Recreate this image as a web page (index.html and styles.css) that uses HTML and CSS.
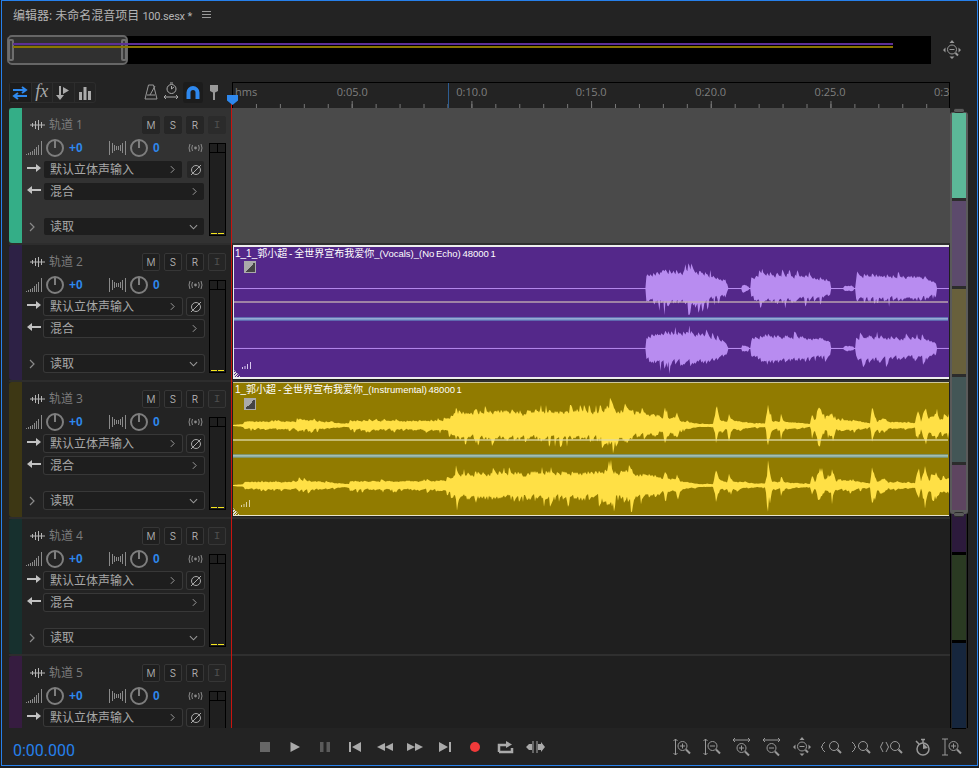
FILE: index.html
```html
<!DOCTYPE html>
<html lang="zh-CN">
<head>
    <meta charset="UTF-8">
    <title>编辑器</title>
    <link rel="stylesheet" href="styles.css">
</head>
<body>
    <!-- shared icons -->
    <svg class="defs" width="0" height="0">
        <symbol id="i-wave" viewBox="0 0 15 12"><path d="M0 6H15M2.500 4v4M5.500 2v8M8.500 1v10M11.500 3v6" stroke="currentColor" fill="none"/></symbol>
        <symbol id="i-vol" viewBox="0 0 16 16"><path d="M.5 14v1M2.500 13v2M4.500 12v3M6.500 11v4M8.500 9v6M10.500 7v8M12.500 5v10M15.500 1v14" stroke="currentColor" fill="none"/></symbol>
        <symbol id="i-pan" viewBox="0 0 17 16"><path d="M.5 1v14M3.500 3v10M5.500 5v6M7.500 6v4M9.500 6v4M11.500 5v6M13.500 3v10M16.500 1v14" stroke="currentColor" fill="none"/></symbol>
        <symbol id="i-knob" viewBox="0 0 18 18"><circle cx="9" cy="9" r="8" stroke="currentColor" stroke-width="2" fill="none"/><path d="M9 1V9" stroke="currentColor" stroke-width="2"/></symbol>
        <symbol id="i-radio" viewBox="0 0 17 10"><circle cx="8.500" cy="5" r="1.400" fill="currentColor"/><path d="M5.500 2Q4 5 5.500 8M3 1Q1 5 3 9M11.500 2Q13 5 11.500 8M14 1Q16 5 14 9" stroke="currentColor" fill="none"/></symbol>
        <symbol id="i-right" viewBox="0 0 14 10"><path d="M0 5H11" stroke="currentColor" stroke-width="2"/><path d="M9 1L14 5L9 9Z" fill="currentColor"/></symbol>
        <symbol id="i-left" viewBox="0 0 14 10"><path d="M3 5H14" stroke="currentColor" stroke-width="2"/><path d="M5 1L0 5L5 9Z" fill="currentColor"/></symbol>
        <symbol id="i-chev" viewBox="0 0 6 10"><path d="M1 1L5 5L1 9" stroke="currentColor" stroke-width="1.200" fill="none"/></symbol>
        <symbol id="i-down" viewBox="0 0 10 6"><path d="M1 1L5 5L9 1" stroke="currentColor" stroke-width="1.200" fill="none"/></symbol>
        <symbol id="i-phase" viewBox="0 0 12 12"><circle cx="6" cy="6" r="4.500" stroke="currentColor" fill="none"/><path d="M1 11L11 1" stroke="currentColor"/></symbol>

        <symbol id="z-vin" viewBox="0 0 24 24"><path d="M5.500 4V20M3.500 6L5.500 4L7.500 6M3.500 18L5.500 20L7.500 18" stroke="currentColor" fill="none"/><circle cx="12.500" cy="11" r="4.500" stroke="currentColor" fill="none"/><path d="M16 14.500L20 18.500" stroke="currentColor" stroke-width="2"/><path d="M10 11H15M12.500 8.500V13.500" stroke="currentColor"/></symbol>
        <symbol id="z-vout" viewBox="0 0 24 24"><path d="M5.500 4V20M3.500 6L5.500 4L7.500 6M3.500 18L5.500 20L7.500 18" stroke="currentColor" fill="none"/><circle cx="12.500" cy="11" r="4.500" stroke="currentColor" fill="none"/><path d="M16 14.500L20 18.500" stroke="currentColor" stroke-width="2"/><path d="M10 11H15" stroke="currentColor"/></symbol>
        <symbol id="z-hin" viewBox="0 0 24 24"><path d="M3 5H20M5 3L3 5L5 7M18 3L20 5L18 7" stroke="currentColor" fill="none"/><circle cx="11.500" cy="13" r="4.500" stroke="currentColor" fill="none"/><path d="M15 16.500L19 20.500" stroke="currentColor" stroke-width="2"/><path d="M9 13H14M11.500 10.500V15.500" stroke="currentColor"/></symbol>
        <symbol id="z-hout" viewBox="0 0 24 24"><path d="M3 5H20M5 3L3 5L5 7M18 3L20 5L18 7" stroke="currentColor" fill="none"/><circle cx="11.500" cy="13" r="4.500" stroke="currentColor" fill="none"/><path d="M15 16.500L19 20.500" stroke="currentColor" stroke-width="2"/><path d="M9 13H14" stroke="currentColor"/></symbol>
        <symbol id="z-full" viewBox="0 0 24 24"><circle cx="12" cy="11.500" r="4.500" stroke="currentColor" fill="none"/><path d="M15.500 15L18 17.500" stroke="currentColor" stroke-width="2"/><path d="M9.500 11.500H14.500" stroke="currentColor"/><path d="M12 2L14.500 5H9.500ZM12 21L14.500 18.500H9.500ZM3 12L5.500 9.500V14.500ZM21 12L18.500 9.500V14.500Z" fill="currentColor"/></symbol>
        <symbol id="z-lmark" viewBox="0 0 24 24"><path d="M5 7L2.500 9.500V11L1 12L2.500 13V14.500L5 17" stroke="currentColor" fill="none"/><circle cx="14" cy="11" r="4.500" stroke="currentColor" fill="none"/><path d="M17.500 14.500L21 18" stroke="currentColor" stroke-width="2"/></symbol>
        <symbol id="z-rmark" viewBox="0 0 24 24"><path d="M2 7L4.500 9.500V11L6 12L4.500 13V14.500L2 17" stroke="currentColor" fill="none"/><circle cx="13" cy="11" r="4.500" stroke="currentColor" fill="none"/><path d="M16.500 14.500L20 18" stroke="currentColor" stroke-width="2"/></symbol>
        <symbol id="z-both" viewBox="0 0 24 24"><path d="M3 7L.5 12L3 17M6 7L8.500 12L6 17" stroke="currentColor" fill="none"/><circle cx="15" cy="11" r="4.500" stroke="currentColor" fill="none"/><path d="M18.500 14.500L22 18" stroke="currentColor" stroke-width="2"/></symbol>
        <symbol id="z-time" viewBox="0 0 24 24"><circle cx="13" cy="14" r="6" stroke="currentColor" stroke-width="1.500" fill="none"/><path d="M13 14L13 8L18 13Z" fill="currentColor"/><path d="M11 4.500H15M13 4.500V8M6 6L9 9" stroke="currentColor" stroke-width="1.500"/></symbol>
        <symbol id="z-beam" viewBox="0 0 24 24"><path d="M5 4V20M2 4H8M2 20H8" stroke="currentColor" fill="none"/><circle cx="13.500" cy="11" r="4.500" stroke="currentColor" fill="none"/><path d="M17 14.500L21 18.500" stroke="currentColor" stroke-width="2"/><path d="M11 11H16M13.500 8.500V13.500" stroke="currentColor"/></symbol>
    </svg>

    <div class="app">
        <div class="titlebar">
            <span class="title">编辑器: 未命名混音项目 <span class="title-file">100.sesx *</span></span>
            <svg class="menu-icon" width="9" height="8" viewBox="0 0 9 8"><path d="M0 .5H9M0 3.500H9M0 6.500H9" stroke="currentColor"/></svg>
        </div>

        <div class="overview">
            <div class="overview-track">
                <div class="overview-handle"><span class="grip"></span><span class="grip"></span></div>
                <div class="overview-line purple"></div>
                <div class="overview-line olive"></div>
            </div>
            <svg class="overview-zoom"><use href="#z-full"/></svg>
        </div>

        <div class="workspace">
            <div class="toolbar">
                <div class="tool-group">
                    <span class="tool active">
                        <svg width="16" height="14" viewBox="0 0 16 14"><path d="M1 4H13M10 1L14 4L10 7M15 10H3M6 7L2 10L6 13" stroke="#2e88ee" stroke-width="2" fill="none"/></svg>
                    </span>
                    <span class="tool fx">fx</span>
                    <span class="tool">
                        <svg width="16" height="16" viewBox="0 0 16 16"><path d="M5 1V11" stroke="#aaa" stroke-width="2"/><path d="M1 10H9L5 15ZM8 2V9L14 5.500Z" fill="#aaa"/></svg>
                    </span>
                    <span class="tool">
                        <svg width="14" height="14" viewBox="0 0 14 14"><path d="M1 6H4V14H1ZM5.500 1H8.500V14H5.500ZM10 5H13V14H10Z" fill="#aaa"/></svg>
                    </span>
                </div>
                <svg class="tool-icon first" viewBox="0 0 20 20"><path d="M7.500 3H12.500L16 17H4ZM6 13H14M9 13L14 4" stroke="#999" fill="none"/></svg>
                <svg class="tool-icon" viewBox="0 0 20 20"><circle cx="10.500" cy="7" r="4.500" stroke="#aaa" fill="none"/><path d="M9 1H12M10.500 4V7L13 5M3 15H17M5 13L3 15L5 17M15 13L17 15L15 17" stroke="#aaa" fill="none"/></svg>
                <span class="tool magnet">
                    <svg width="14" height="13" viewBox="0 0 14 13"><path d="M2.500 13V6.500A4.500 4.500 0 0 1 11.500 6.500V13" stroke="#2e88ee" stroke-width="4" fill="none"/></svg>
                </span>
                <svg class="tool-icon" viewBox="0 0 20 20"><path d="M6 3H14V9L11 10.500V18H9V10.500L6 9Z" fill="#999"/></svg>
            </div>

            <div class="ruler">
                <span class="ruler-unit">hms</span>
                <span class="ruler-label">0:05.0</span>
                <span class="ruler-label">0:10.0</span>
                <span class="ruler-label">0:15.0</span>
                <span class="ruler-label">0:20.0</span>
                <span class="ruler-label">0:25.0</span>
                <span class="ruler-label cut">0:3</span>
                <span class="ruler-mark"></span>
            </div>
            <div class="ruler-end"></div>

            <div class="headers">
                <div class="track selected">
                    <div class="strip c1"></div>
                    <div class="track-body">
                        <div class="track-top">
                            <svg class="ic-wave"><use href="#i-wave"/></svg>
                            <span class="track-name">轨道 1</span>
                            <span class="msri">M</span><span class="msri">S</span><span class="msri">R</span><span class="msri off">I</span>
                        </div>
                        <div class="track-main">
                            <div class="controls">
                                <div class="knobs">
                                    <svg class="ic-vol"><use href="#i-vol"/></svg><svg class="knob"><use href="#i-knob"/></svg><span class="val vol">+0</span>
                                    <svg class="ic-pan"><use href="#i-pan"/></svg><svg class="knob"><use href="#i-knob"/></svg><span class="val pan">0</span>
                                    <svg class="ic-radio"><use href="#i-radio"/></svg>
                                </div>
                                <div class="io"><svg class="ic-arrow"><use href="#i-right"/></svg><div class="select short">默认立体声输入<svg class="ic-chev"><use href="#i-chev"/></svg></div><span class="phase"><svg><use href="#i-phase"/></svg></span></div>
                                <div class="io"><svg class="ic-arrow"><use href="#i-left"/></svg><div class="select">混合<svg class="ic-chev"><use href="#i-chev"/></svg></div></div>
                                <div class="io auto"><svg class="ic-expand"><use href="#i-chev"/></svg><div class="select">读取<svg class="ic-downv"><use href="#i-down"/></svg></div></div>
                            </div>
                            <div class="meter"><div class="meter-head"><span></span><span></span></div><div class="meter-foot"><span></span><span></span></div></div>
                        </div>
                    </div>
                </div>
                <div class="track">
                    <div class="strip c2"></div>
                    <div class="track-body">
                        <div class="track-top">
                            <svg class="ic-wave"><use href="#i-wave"/></svg>
                            <span class="track-name">轨道 2</span>
                            <span class="msri">M</span><span class="msri">S</span><span class="msri">R</span><span class="msri off">I</span>
                        </div>
                        <div class="track-main">
                            <div class="controls">
                                <div class="knobs">
                                    <svg class="ic-vol"><use href="#i-vol"/></svg><svg class="knob"><use href="#i-knob"/></svg><span class="val vol">+0</span>
                                    <svg class="ic-pan"><use href="#i-pan"/></svg><svg class="knob"><use href="#i-knob"/></svg><span class="val pan">0</span>
                                    <svg class="ic-radio"><use href="#i-radio"/></svg>
                                </div>
                                <div class="io"><svg class="ic-arrow"><use href="#i-right"/></svg><div class="select short">默认立体声输入<svg class="ic-chev"><use href="#i-chev"/></svg></div><span class="phase"><svg><use href="#i-phase"/></svg></span></div>
                                <div class="io"><svg class="ic-arrow"><use href="#i-left"/></svg><div class="select">混合<svg class="ic-chev"><use href="#i-chev"/></svg></div></div>
                                <div class="io auto"><svg class="ic-expand"><use href="#i-chev"/></svg><div class="select">读取<svg class="ic-downv"><use href="#i-down"/></svg></div></div>
                            </div>
                            <div class="meter"><div class="meter-head"><span></span><span></span></div><div class="meter-foot"><span></span><span></span></div></div>
                        </div>
                    </div>
                </div>
                <div class="track">
                    <div class="strip c3"></div>
                    <div class="track-body">
                        <div class="track-top">
                            <svg class="ic-wave"><use href="#i-wave"/></svg>
                            <span class="track-name">轨道 3</span>
                            <span class="msri">M</span><span class="msri">S</span><span class="msri">R</span><span class="msri off">I</span>
                        </div>
                        <div class="track-main">
                            <div class="controls">
                                <div class="knobs">
                                    <svg class="ic-vol"><use href="#i-vol"/></svg><svg class="knob"><use href="#i-knob"/></svg><span class="val vol">+0</span>
                                    <svg class="ic-pan"><use href="#i-pan"/></svg><svg class="knob"><use href="#i-knob"/></svg><span class="val pan">0</span>
                                    <svg class="ic-radio"><use href="#i-radio"/></svg>
                                </div>
                                <div class="io"><svg class="ic-arrow"><use href="#i-right"/></svg><div class="select short">默认立体声输入<svg class="ic-chev"><use href="#i-chev"/></svg></div><span class="phase"><svg><use href="#i-phase"/></svg></span></div>
                                <div class="io"><svg class="ic-arrow"><use href="#i-left"/></svg><div class="select">混合<svg class="ic-chev"><use href="#i-chev"/></svg></div></div>
                                <div class="io auto"><svg class="ic-expand"><use href="#i-chev"/></svg><div class="select">读取<svg class="ic-downv"><use href="#i-down"/></svg></div></div>
                            </div>
                            <div class="meter"><div class="meter-head"><span></span><span></span></div><div class="meter-foot"><span></span><span></span></div></div>
                        </div>
                    </div>
                </div>
                <div class="track">
                    <div class="strip c4"></div>
                    <div class="track-body">
                        <div class="track-top">
                            <svg class="ic-wave"><use href="#i-wave"/></svg>
                            <span class="track-name">轨道 4</span>
                            <span class="msri">M</span><span class="msri">S</span><span class="msri">R</span><span class="msri off">I</span>
                        </div>
                        <div class="track-main">
                            <div class="controls">
                                <div class="knobs">
                                    <svg class="ic-vol"><use href="#i-vol"/></svg><svg class="knob"><use href="#i-knob"/></svg><span class="val vol">+0</span>
                                    <svg class="ic-pan"><use href="#i-pan"/></svg><svg class="knob"><use href="#i-knob"/></svg><span class="val pan">0</span>
                                    <svg class="ic-radio"><use href="#i-radio"/></svg>
                                </div>
                                <div class="io"><svg class="ic-arrow"><use href="#i-right"/></svg><div class="select short">默认立体声输入<svg class="ic-chev"><use href="#i-chev"/></svg></div><span class="phase"><svg><use href="#i-phase"/></svg></span></div>
                                <div class="io"><svg class="ic-arrow"><use href="#i-left"/></svg><div class="select">混合<svg class="ic-chev"><use href="#i-chev"/></svg></div></div>
                                <div class="io auto"><svg class="ic-expand"><use href="#i-chev"/></svg><div class="select">读取<svg class="ic-downv"><use href="#i-down"/></svg></div></div>
                            </div>
                            <div class="meter"><div class="meter-head"><span></span><span></span></div><div class="meter-foot"><span></span><span></span></div></div>
                        </div>
                    </div>
                </div>
                <div class="track">
                    <div class="strip c5"></div>
                    <div class="track-body">
                        <div class="track-top">
                            <svg class="ic-wave"><use href="#i-wave"/></svg>
                            <span class="track-name">轨道 5</span>
                            <span class="msri">M</span><span class="msri">S</span><span class="msri">R</span><span class="msri off">I</span>
                        </div>
                        <div class="track-main">
                            <div class="controls">
                                <div class="knobs">
                                    <svg class="ic-vol"><use href="#i-vol"/></svg><svg class="knob"><use href="#i-knob"/></svg><span class="val vol">+0</span>
                                    <svg class="ic-pan"><use href="#i-pan"/></svg><svg class="knob"><use href="#i-knob"/></svg><span class="val pan">0</span>
                                    <svg class="ic-radio"><use href="#i-radio"/></svg>
                                </div>
                                <div class="io"><svg class="ic-arrow"><use href="#i-right"/></svg><div class="select short">默认立体声输入<svg class="ic-chev"><use href="#i-chev"/></svg></div><span class="phase"><svg><use href="#i-phase"/></svg></span></div>
                            </div>
                            <div class="meter"><div class="meter-head"><span></span><span></span></div></div>
                        </div>
                    </div>
                </div>
            </div>

            <div class="lanes">
                <div class="lane filled"></div>
                <div class="lane">
                    <div class="clip vocals">
                        <svg class="waves" id="wave-vocals" viewBox="233 247 716 130"></svg>
                        <div class="clip-title">1_1_郭小超 - 全世界宣布我爱你<span class="ascii">_(Vocals)_(No Echo) 48000 1</span></div>
                        <div class="fade"></div>
                        <svg class="clip-bars" viewBox="0 0 10 7"><path d="M.5 7V5M3 7V4M5.500 7V2M8.500 7V0" stroke="#d8c8ee" fill="none"/></svg>
                        <div class="corner"></div>
                    </div>
                </div>
                <div class="lane">
                    <div class="clip instrumental">
                        <svg class="waves" id="wave-inst" viewBox="233 383 716 132"></svg>
                        <div class="clip-title">1_郭小超 - 全世界宣布我爱你<span class="ascii">_(Instrumental) 48000 1</span></div>
                        <div class="fade"></div>
                        <svg class="clip-bars" viewBox="0 0 10 7"><path d="M.5 7V5M3 7V4M5.500 7V2M8.500 7V0" stroke="#ddd3a0" fill="none"/></svg>
                        <div class="corner"></div>
                    </div>
                </div>
                <div class="lane"></div>
                <div class="lane"></div>
            </div>

            <div class="scroll">
                <div class="scroll-thumb">
                    <span class="scroll-grip top"></span>
                    <div class="seg s1"></div>
                    <div class="seg s2"></div>
                    <div class="seg s3"></div>
                    <div class="seg s4"></div>
                    <div class="seg s5"></div>
                    <span class="scroll-grip bottom"></span>
                </div>
                <div class="scroll-rest">
                    <div class="seg s6"></div>
                    <div class="seg s7"></div>
                    <div class="seg s8"></div>
                </div>
            </div>

            <div class="playhead"><span class="playhead-cap"></span></div>
        </div>

        <div class="transport">
            <span class="time">0:00.000</span>
            <div class="controls-center">
                <svg class="btn" viewBox="0 0 24 24"><path d="M7 7H17V17H7Z" fill="#666"/></svg>
                <svg class="btn" viewBox="0 0 24 24"><path d="M7.500 7L17 12L7.500 17Z" fill="#aaa"/></svg>
                <svg class="btn" viewBox="0 0 24 24"><path d="M7 7H10.500V17H7ZM13.500 7H17V17H13.500Z" fill="#5a5a5a"/></svg>
                <svg class="btn" viewBox="0 0 24 24"><path d="M6 7H8V17H6ZM18 7V17L9 12Z" fill="#aaa"/></svg>
                <svg class="btn" viewBox="0 0 24 24"><path d="M12 8V16L4 12ZM20 8V16L12 12Z" fill="#aaa"/></svg>
                <svg class="btn" viewBox="0 0 24 24"><path d="M4 8V16L12 12ZM12 8V16L20 12Z" fill="#aaa"/></svg>
                <svg class="btn" viewBox="0 0 24 24"><path d="M16 7H18V17H16ZM6 7V17L15 12Z" fill="#aaa"/></svg>
                <svg class="btn" viewBox="0 0 24 24"><circle cx="12" cy="12" r="5" fill="#f03a3a"/></svg>
                <svg class="btn" viewBox="0 0 24 24"><path d="M6 17V10H13M19 13V17H6" stroke="#aaa" stroke-width="2.500" fill="none"/><path d="M13 6L19 9.500L13 13Z" fill="#aaa"/></svg>
                <svg class="btn" viewBox="0 0 24 24"><path d="M10 6V18M14 6V18" stroke="#aaa"/><path d="M3 12L6 9H9V15H6ZM15 9H18V7L22 12L18 17V15H15Z" fill="#aaa"/></svg>
            </div>
            <div class="controls-right">
                <svg class="btn"><use href="#z-vin"/></svg>
                <svg class="btn"><use href="#z-vout"/></svg>
                <svg class="btn"><use href="#z-hin"/></svg>
                <svg class="btn"><use href="#z-hout"/></svg>
                <svg class="btn"><use href="#z-full"/></svg>
                <svg class="btn"><use href="#z-lmark"/></svg>
                <svg class="btn"><use href="#z-rmark"/></svg>
                <svg class="btn"><use href="#z-both"/></svg>
                <svg class="btn"><use href="#z-time"/></svg>
                <svg class="btn"><use href="#z-beam"/></svg>
            </div>
        </div>
    </div>

    <script src="script.js"></script>
</body>
</html>
```

FILE: styles.css
```css
* { box-sizing: border-box; }
html, body { margin: 0; height: 100%; background: #1d1d1d; overflow: hidden; }
body { font-family: "Open Sans", "Noto Sans CJK SC", sans-serif; font-size: 12px; color: #aaa; }
.defs { position: absolute; }

.app { margin-left: 1px; width: 977px; height: 766px; border: 1px solid #2680eb; background: #232323; overflow: hidden; }

.titlebar { height: 27px; padding-left: 11px; display: flex; align-items: center; }
.title { color: #b4b4b4; font-size: 12px; white-space: nowrap; }
.title-file { font-family: Roboto, sans-serif; font-size: 11px; letter-spacing: -.2px; }
.menu-icon { margin-left: 10px; color: #999; }

.overview { display: flex; margin-top: 8px; margin-left: 6px; height: 28px; }
.overview-track { position: relative; width: 923px; background: #000; padding: 7px 38px 0 5px; }
.overview-handle { position: absolute; left: -1px; top: -1px; width: 121px; height: 30px; background: #303030; border: 2px solid #666; border-radius: 5px; display: flex; justify-content: space-between; }
.grip { width: 6px; margin: 2px -1px; background: #3c3c3c; border: 2px solid #6e6e6e; border-radius: 2px; }
.overview-line { position: relative; }
.overview-line.purple { height: 2px; margin-bottom: 1px; background: #5c2f96; }
.overview-line.olive { height: 2px; background: #8a7500; }
.overview-zoom { margin-left: 9px; width: 24px; height: 24px; margin-top: 2px; color: #999; }

.workspace { position: relative; margin-top: 18px; margin-left: 7px; display: grid; grid-template-columns: 222px 719px 18px; grid-template-rows: 26px 620px; }

.toolbar { display: flex; align-items: flex-start; }
.tool-group { display: flex; height: 21px; width: 87px; border: 1px solid #2d2d2d; border-radius: 3px; }
.tool { display: flex; align-items: center; justify-content: center; flex: 1; border-left: 1px solid #2d2d2d; }
.tool.active { background: #1c1c1c; border-left: 0; }
.tool.fx { font-family: "Liberation Serif", serif; font-style: italic; font-size: 18px; color: #aaa; padding-bottom: 3px; }
.tool-icon { width: 20px; height: 20px; }
.tool-icon.first { margin-left: 45px; }
.tool.magnet { flex: none; width: 20px; height: 21px; margin: 0 1px 0 2px; background: #1c1c1c; border: 0; border-radius: 3px; }

.ruler { position: relative; display: flex; border-top: 1px solid #000; border-left: 1px solid #000; border-right: 1px solid #000; color: #7f7f7f; font-size: 11px; margin-left: 1px;
    background-image: linear-gradient(90deg, transparent 0 23px, #777 23px 24px), linear-gradient(90deg, transparent 0 119px, #777 119px 120px);
    background-size: 23.94px 4px, 119.7px 7px; background-position: 0 100%, 0 100%; background-repeat: repeat-x; }
.ruler-unit { width: 104px; padding-left: 2px; line-height: 18px; }
.ruler-label { width: 119.7px; line-height: 18px; white-space: nowrap; }
.ruler-label.cut { width: 15px; overflow: hidden; }
.ruler-mark { position: absolute; left: 215px; top: 0; bottom: 0; width: 1px; background: #2d5d92; }

.headers { grid-column: 1; height: 620px; overflow: hidden; }
.track { display: flex; height: 135px; margin-bottom: 2px; background: #232323; }
.track + .track { box-shadow: 0 -2px 0 #2d2d2d; }
.track.selected { background: #323232; }
.strip { width: 13px; flex: none; border-radius: 3px 0 0 3px; }
.c1 { background: #34ae87; }
.c2 { background: #2d2145; }
.c3 { background: #3d3714; }
.c4 { background: #17302e; }
.c5 { background: #361c40; }
.track-body { flex: 1; }

.track-top { display: flex; align-items: center; height: 19px; margin-top: 7px; padding-left: 8px; }
.ic-wave { width: 15px; height: 12px; color: #b5b5b5; }
.track-name { width: 93px; margin: -2px 0 0 4px; color: #7c7c7c; font-size: 12px; white-space: nowrap; }
.msri { width: 18px; height: 18px; margin-right: 4px; display: flex; align-items: center; justify-content: center; background: #1f1f1f; border: 1px solid #363636; border-radius: 2px; font-family: Inter, sans-serif; font-weight: 300; font-size: 10px; color: #c0c0c0; }
.msri.off { font-family: "Liberation Mono", monospace; font-size: 11px; color: #4f4f4f; background: #252525; }
.selected .msri { background: #262626; border-color: #262626; }
.selected .msri.off { background: #2b2b2b; border-color: #2b2b2b; }

.track-main { display: flex; }
.controls { width: 187px; flex: none; padding-right: 5px; }
.knobs { display: flex; align-items: center; height: 24px; margin-top: 2px; margin-bottom: 1px; padding-left: 4px; }
.ic-vol { width: 16px; height: 16px; color: #8a8a8a; flex: none; }
.knob { width: 18px; height: 18px; margin-left: 4px; color: #7e7e7e; flex: none; }
.val { color: #2e88ee; font-family: "Liberation Sans", sans-serif; font-weight: bold; font-size: 12px; margin-left: 5px; }
.val.vol { width: 40px; }
.val.pan { width: 30px; }
.ic-pan { width: 17px; height: 16px; color: #8a8a8a; flex: none; }
.ic-radio { width: 17px; height: 10px; color: #8a8a8a; margin-left: 4px; flex: none; }

.io { display: flex; align-items: center; height: 17px; margin-bottom: 5px; padding-left: 5px; }
.io.auto { margin-top: 18px; }
.ic-arrow { width: 14px; height: 10px; color: #c2c2c2; flex: none; margin-top: -4px; }
.ic-expand { width: 6px; height: 10px; color: #8a8a8a; margin: 0 6px 0 2px; flex: none; }
.select { position: relative; flex: 1; height: 17px; margin-left: 3px; padding-left: 6px; line-height: 17px; background: #1e1e1e; border-radius: 2px; color: #a8a8a8; font-size: 12px; }
.select.short { flex: none; width: 138px; }
.track:not(.selected) .select { box-shadow: 0 0 0 1px #383838; }
.ic-chev { position: absolute; right: 7px; top: 4px; width: 5px; height: 9px; color: #999; }
.ic-downv { position: absolute; right: 6px; top: 6px; width: 9px; height: 6px; color: #999; }
.phase { flex: none; width: 17px; height: 17px; margin-left: 5px; display: flex; align-items: center; justify-content: center; background: #262626; border-radius: 2px; color: #aaa; }
.track:not(.selected) .phase { box-shadow: 0 0 0 1px #383838; background: #1f1f1f; }
.phase svg { width: 12px; height: 12px; }

.meter { width: 17px; height: 93px; margin-top: 9px; display: flex; flex-direction: column; justify-content: space-between; background: #1f1f1f; border: 1px solid #000; }
.meter-head { display: flex; height: 9px; border-bottom: 1px solid #000; }
.meter-head span { flex: 1; }
.meter-head span + span { border-left: 1px solid #000; }
.meter-foot { display: flex; gap: 1px; padding: 0 1px 1px; }
.meter-foot span { flex: 1; height: 1px; background: #f5e61e; }

.lanes { grid-column: 2; height: 620px; overflow: hidden; margin-left: 1px; background: #2f2f2f; }
.lane { height: 135px; margin-bottom: 2px; background: #1f1f1f; }
.lane.filled { background: #4a4a4a; }

.clip { position: relative; height: 134px; margin-left: 1px; margin-right: 1px; overflow: hidden; color: #fff; }
.clip.vocals { background: #54288a; border-top: 2px solid #eee; border-bottom: 2px solid #eee; border-left: 1px solid #eee; }
.clip.instrumental { background: #917b00; border-top: 1px solid #cfc89a; border-bottom: 1px solid #e8e4c8; }
.waves { position: absolute; left: 0; top: 0; width: 100%; height: 100%; }
.clip-title { position: relative; padding: 1px 0 0 1px; font-family: "Liberation Sans", "Noto Sans CJK SC", sans-serif; font-size: 10px; line-height: 12px; white-space: nowrap; word-spacing: -1px; }
.clip-title .ascii { font-size: 9.500px; }
.instrumental .clip-title { padding-left: 2px; }
.fade { position: relative; width: 12px; height: 12px; margin: 1px 0 0 10px; border: 1px solid #aaa; background: linear-gradient(135deg, #aaa 50%, #444 50%); }
.instrumental .fade { margin: 2px 0 0 11px; }
.clip-bars { position: absolute; left: 8px; bottom: 8px; width: 10px; height: 7px; }
.corner { position: absolute; left: 0; bottom: 0; width: 7px; height: 7px; background: repeating-linear-gradient(135deg, #ddd 0 1px, transparent 1px 2px); clip-path: polygon(0 0, 100% 100%, 0 100%); }

.scroll { grid-column: 3; padding-top: 4px; height: 620px; }
.scroll-thumb { position: relative; width: 18px; height: 402px; background: #5a5a5a; padding: 1px 2px 0; border-radius: 3px; }
.seg { height: 85px; margin-bottom: 3px; box-shadow: 0 3px 0 #2c2c2c; }
.s1 { background: #5cb898; }
.s2 { background: #5c4a6c; }
.s3 { background: #68603c; }
.s4 { background: #435656; }
.s5 { height: 45px; margin: 0; box-shadow: none; background: #5e4560; }
.scroll-grip { position: absolute; left: 4px; width: 10px; height: 5px; background: #5a5a5a; border-top: 1px solid #2a2a2a; border-bottom: 1px solid #2a2a2a; border-radius: 2px; }
.scroll-grip.top { top: -4px; }
.scroll-grip.bottom { bottom: -3px; }
.scroll-rest { width: 18px; padding: 0 1px; border-left: 1px solid #000; border-right: 1px solid #000; }
.s6 { height: 38px; background: #2c1a3c; }
.s7 { background: #2a3a22; }
.s8 { background: #16263d; margin-bottom: 0; box-shadow: 0 1px 0 #000; }
.s6, .s7 { box-shadow: 0 3px 0 #000; }

.ruler-end { grid-column: 3; grid-row: 1; }
.playhead { position: absolute; left: 222px; top: 13px; width: 1px; height: 633px; background: #c8140f; }
.playhead-cap { position: absolute; left: -4px; top: 0; width: 11px; height: 10px; background: #2e88ee; clip-path: polygon(0 0, 100% 0, 100% 55%, 50% 100%, 0 55%); }

.transport { display: flex; align-items: center; height: 37px; }
.time { width: 251px; padding-left: 11px; color: #2680eb; font-family: Roboto, sans-serif; font-size: 16px; margin-top: 8px; }
.controls-center, .controls-right { display: flex; gap: 6px; }
.controls-center { width: 417px; }
.btn { width: 24px; height: 24px; color: #999; flex: none; }
```

FILE: script.js
```js
// draws the clip waveforms from hand read envelopes: [x, amplitude]
const vocalsEnv = [[645, 0], [646, 14], [660, 17], [664, 20], [680, 18], [689, 20], [705, 17], [715, 12], [725, 9], [728, 0],
    [741, 0], [742, 3], [748, 2], [749, 0], [750, 0], [751, 11], [766, 17], [780, 15], [800, 14], [820, 12], [830, 8], [831, 0],
    [843, 0], [845, 3], [853, 2], [854, 0], [855, 0], [856, 13], [868, 15], [900, 13], [925, 12], [936, 6], [937, 0]];

const instEnv = [[232, 0], [243, 1], [245, 4], [296, 4], [298, 7], [315, 5], [345, 1.500], [349, 1.500], [350, 5], [420, 5],
    [445, 6], [452, 10], [455, 14], [456, 23], [458, 15], [465, 14], [474, 14], [476, 20], [478, 15], [520, 16], [524, 11], [528, 16], [600, 16],
    [612, 23], [616, 16], [630, 18], [632, 22], [634, 15], [655, 12], [663, 8], [665, 20], [668, 8], [675, 8], [677, 13], [680, 5],
    [700, 1.200], [713, 1.200], [716, 18], [720, 6], [727, 4], [729, 13], [733, 5], [755, 2], [765, 2], [768, 22], [772, 5], [780, 4],
    [781, 12], [784, 4], [810, 1.200], [812, 13], [815, 4], [820, 21], [825, 6], [832, 14], [836, 5], [850, 6], [870, 2], [872, 21],
    [877, 4], [885, 9], [888, 4], [915, 2.500], [918, 20], [921, 4], [925, 23], [929, 7], [936, 15], [940, 7], [947, 10], [949, 9]];

// small fixed generator so every load gives the same picture
function makeRandom(seed) {
    return function () {
        seed = (seed * 16807) % 2147483647;
        return seed / 2147483647;
    };
}

function ampAt(env, x) {
    for (let i = 1; i < env.length; i++) {
        if (x <= env[i][0]) {
            const t = (x - env[i - 1][0]) / (env[i][0] - env[i - 1][0]);
            return env[i - 1][1] + (env[i][1] - env[i - 1][1]) * t;
        }
    }
    return 0;
}

// sawtooth noise: a peak every few pixels that falls away, for the jagged edge
function jagged(rnd, count, lo, hi, spike) {
    const out = [];
    while (out.length < count) {
        const peak = rnd() > 0.88 ? spike : lo + rnd() * (hi - lo);
        const width = 1 + Math.floor(rnd() * 3);
        for (let i = 0; i < width; i++) out.push(peak * (1 - i * 0.1));
    }
    return out;
}

function wavePath(env, cy, seed, scaleUp) {
    const rnd = makeRandom(seed);
    const startX = env[0][0];
    const count = env[env.length - 1][0] - startX + 1;
    const up = jagged(rnd, count, 0.78, 1, 1.25);
    const down = jagged(rnd, count, 0.6, 1, 1.3);
    const top = [];
    const bottom = [];
    for (let i = 0; i < count; i++) {
        const x = startX + i;
        const a = ampAt(env, x);
        top.push(x + ' ' + (cy - a * up[i] * scaleUp - 0.5).toFixed(1));
        bottom.unshift(x + ' ' + (cy + a * down[i] + 0.5).toFixed(1));
    }
    return 'M' + top.join('L') + 'L' + bottom.join('L') + 'Z';
}

function drawClip(id, env, fill, lineColor, centers, gainY, panY, gainColor) {
    const svg = document.getElementById(id);
    let html = '';
    centers.forEach(function (cy, i) {
        html += '<path d="M233 ' + cy + 'H949" stroke="' + lineColor + '"/>';
        html += '<path d="' + wavePath(env, cy, 4711 + i * 97, i ? 0.9 : 1) + '" fill="' + fill + '"/>';
    });
    html += '<path d="M233 ' + gainY + 'H948" stroke="' + gainColor + '" stroke-width="2"/>';
    html += '<path d="M233 ' + (panY - 1) + 'H948" stroke="#6cb0d8"/><path d="M233 ' + panY + 'H948" stroke="#cfe6f2"/><path d="M233 ' + (panY + 1) + 'H948" stroke="#6cb0d8"/>';
    svg.innerHTML = html;
}

drawClip('wave-vocals', vocalsEnv, '#b88cf0', '#b88cf0', [288.5, 348.5], 302, 319, 'rgba(200,180,180,0.65)');
drawClip('wave-inst', instEnv, '#ffe045', '#ffe045', [425.5, 485.5], 440, 456, 'rgba(225,220,170,0.65)');
```
